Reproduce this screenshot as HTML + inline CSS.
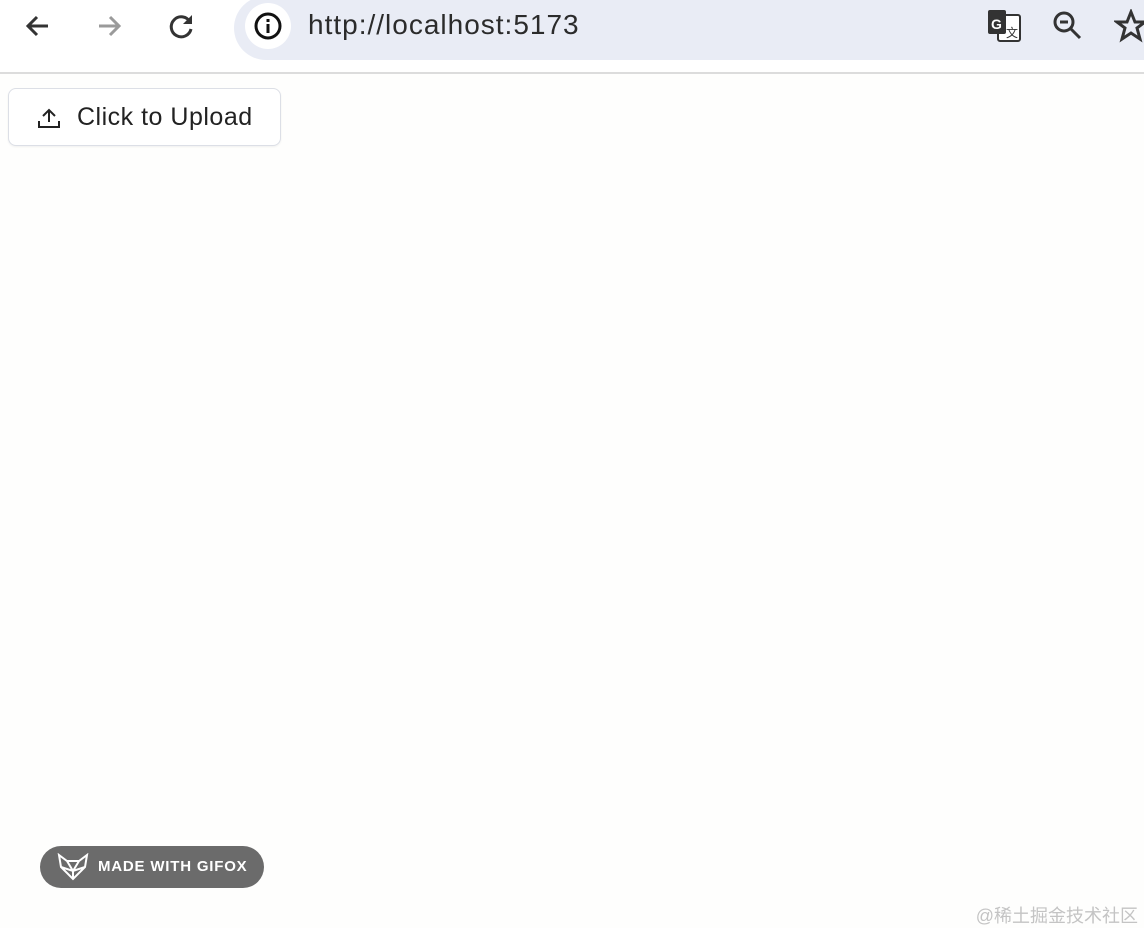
<!DOCTYPE html>
<html><head><meta charset="utf-8"><style>
body{margin:0;width:1144px;height:928px;background:#fefefd;font-family:"Liberation Sans",sans-serif;position:relative;overflow:hidden}
.top{position:absolute;left:0;top:0;width:1144px;height:72px;background:#fff;border-bottom:2px solid #dcdcdc}
.url{position:absolute;left:234px;top:-4px;width:960px;height:64px;background:#e9ecf5;border-radius:32px}
.info{position:absolute;left:245px;top:3px;width:46px;height:46px;border-radius:50%;background:#fff}
.urltxt{position:absolute;left:308px;top:9px;font-size:28px;color:#2b2b2b;letter-spacing:1px}
.btn{position:absolute;left:8px;top:88px;width:271px;height:56px;border:1px solid #dcdfe6;border-radius:8px;background:#fff;box-shadow:0 1px 2px rgba(0,0,0,.06)}
.btn span{position:absolute;left:68px;top:14px;font-size:25px;color:#222;letter-spacing:0.5px}
.gifox{position:absolute;left:40px;top:846px;width:224px;height:42px;border-radius:21px;background:#6b6b6b;color:#fff;font-weight:bold;font-size:15px;letter-spacing:.8px}
.gifox span{position:absolute;left:58px;top:12px}
.wm{position:absolute;right:6px;top:902px;font-size:18px;color:#c4c4c4;font-family:"Liberation Sans","Noto Sans CJK SC",sans-serif}
</style></head><body>
<div class="top">
<svg style="position:absolute;left:24px;top:12px" width="28" height="28" viewBox="0 0 28 28"><path d="M24 14H5M13 5L4 14l9 9" stroke="#333" stroke-width="3" fill="none"/></svg>
<svg style="position:absolute;left:95px;top:12px" width="28" height="28" viewBox="0 0 28 28"><path d="M4 14h19M15 5l9 9-9 9" stroke="#9a9a9a" stroke-width="3" fill="none"/></svg>
<svg style="position:absolute;left:168px;top:12px" width="28" height="28" viewBox="0 0 28 28"><path d="M22 10A10 10 0 1 0 23 17" stroke="#333" stroke-width="3" fill="none"/><path d="M24 3v9h-9z" fill="#333"/></svg>
<div class="url"></div>
<div class="info"></div>
<svg style="position:absolute;left:253px;top:11px" width="30" height="30" viewBox="0 0 30 30"><circle cx="15" cy="15" r="12" stroke="#111" stroke-width="3" fill="none"/><rect x="13.5" y="13" width="3" height="9" fill="#111"/><rect x="13.5" y="8" width="3" height="3" fill="#111"/></svg>
<div class="urltxt">http://localhost:5173</div>
<svg style="position:absolute;left:986px;top:9px" width="36" height="34" viewBox="0 0 36 34"><rect x="12" y="6" width="22" height="26" rx="2" fill="#fff" stroke="#333" stroke-width="2"/><rect x="2" y="1" width="18" height="24" rx="2" fill="#333"/><text x="5" y="20" font-size="14" font-weight="bold" fill="#fff" font-family="Liberation Sans">G</text><text x="20" y="28" font-size="12" fill="#333" font-family="Liberation Sans">文</text></svg>
<svg style="position:absolute;left:1052px;top:10px" width="32" height="32" viewBox="0 0 32 32"><circle cx="12" cy="12" r="9" stroke="#333" stroke-width="3" fill="none"/><path d="M8 12h8M18 18l10 10" stroke="#333" stroke-width="3"/></svg>
<svg style="position:absolute;left:1114px;top:9px" width="34" height="34" viewBox="0 0 34 34"><path d="M17 3l4 10h10l-8 6 3 11-9-6-9 6 3-11-8-6h10z" stroke="#333" stroke-width="3" fill="none"/></svg>
</div>
<div class="btn">
<svg style="position:absolute;left:28px;top:18px" width="24" height="22" viewBox="0 0 24 22"><path d="M12 15V3M6 9l6-6 6 6M2 14v6h20v-6" stroke="#222" stroke-width="2" fill="none"/></svg>
<span>Click to Upload</span></div>
<div class="gifox">
<svg style="position:absolute;left:17px;top:7px" width="32" height="28" viewBox="0 0 32 28"><path d="M2 2l8 6h12l8-6-2 12-12 12L4 14z M10 8l6 10 6-10 M4 14l12 4 12-4 M16 18v8" stroke="#fff" stroke-width="2" fill="none"/></svg>
<span>MADE WITH GIFOX</span></div>
<div class="wm">@稀土掘金技术社区</div>
</body></html>
